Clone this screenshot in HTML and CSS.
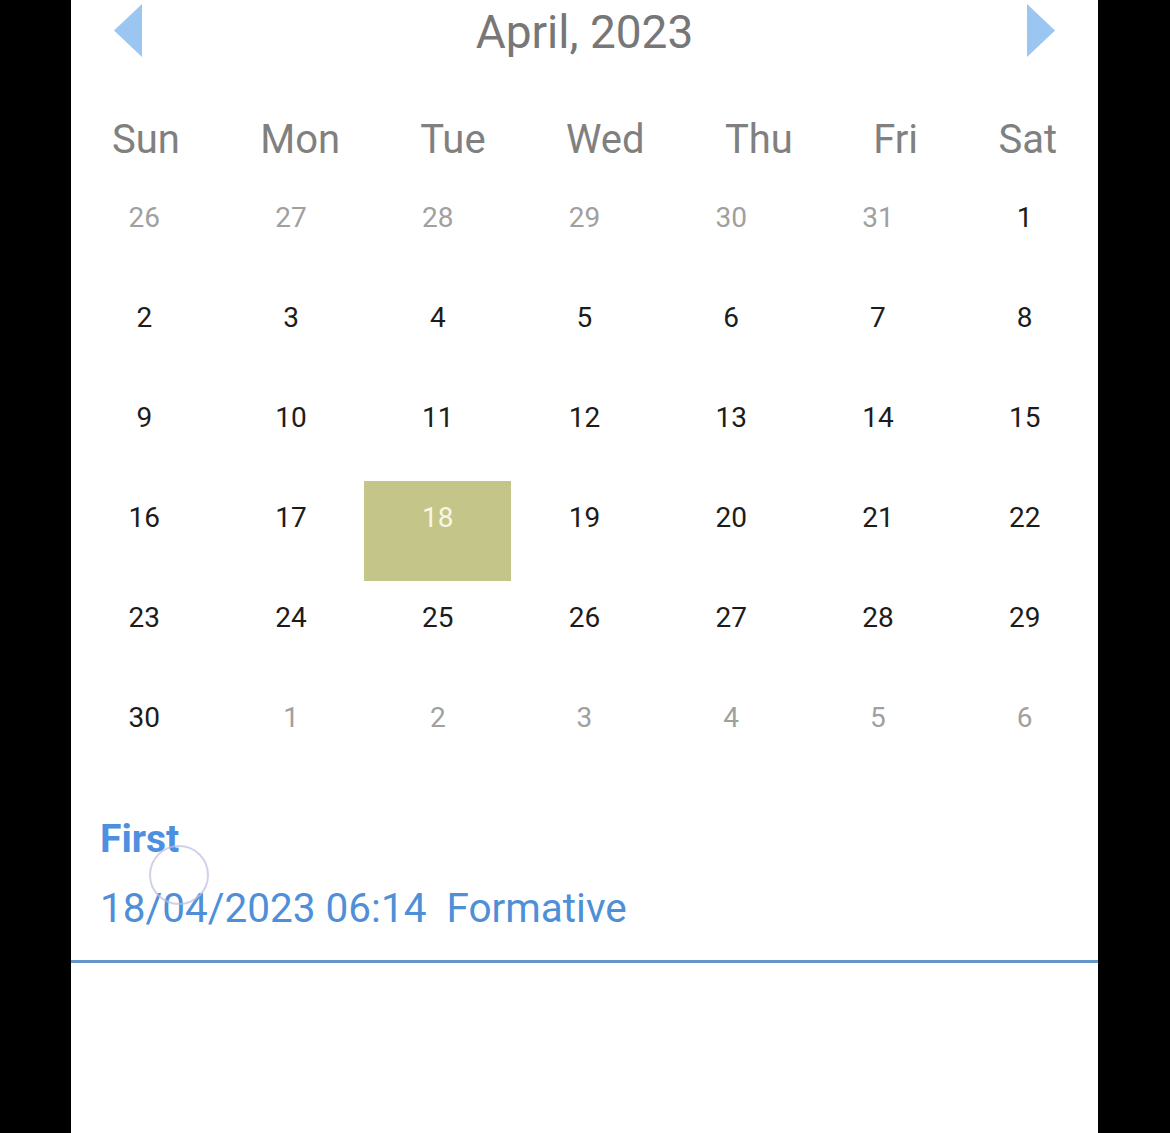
FILE: index.html
```html
<!DOCTYPE html>
<html>
<head>
<meta charset="utf-8">
<link rel="stylesheet" href="styles.css">
</head>
<body>
<div class="panel">
  <div class="header">
    <svg class="arrow" width="28" height="53" viewBox="0 0 28 53"><polygon points="28,0 28,53 0,26.5" fill="#9cc6f2"/></svg>
    <div class="title">April, 2023</div>
    <svg class="arrow" width="28" height="53" viewBox="0 0 28 53"><polygon points="0,0 0,53 28,26.5" fill="#9cc6f2"/></svg>
  </div>
  <div class="weekdays">
    <div>Sun</div><div>Mon</div><div>Tue</div><div>Wed</div><div>Thu</div><div>Fri</div><div>Sat</div>
  </div>
  <div class="days">
    <div class="day other">26</div><div class="day other">27</div><div class="day other">28</div><div class="day other">29</div><div class="day other">30</div><div class="day other">31</div><div class="day">1</div>
    <div class="day">2</div><div class="day">3</div><div class="day">4</div><div class="day">5</div><div class="day">6</div><div class="day">7</div><div class="day">8</div>
    <div class="day">9</div><div class="day">10</div><div class="day">11</div><div class="day">12</div><div class="day">13</div><div class="day">14</div><div class="day">15</div>
    <div class="day">16</div><div class="day">17</div><div class="day selected">18</div><div class="day">19</div><div class="day">20</div><div class="day">21</div><div class="day">22</div>
    <div class="day">23</div><div class="day">24</div><div class="day">25</div><div class="day">26</div><div class="day">27</div><div class="day">28</div><div class="day">29</div>
    <div class="day">30</div><div class="day other">1</div><div class="day other">2</div><div class="day other">3</div><div class="day other">4</div><div class="day other">5</div><div class="day other">6</div>
  </div>
  <div class="event">
    <div class="event-name">First</div>
    <div class="event-detail">18/04/2023 06:14  Formative</div>
    <div class="touch"></div>
  </div>
</div>
</body>
</html>
```
FILE: styles.css
```css
html, body {
  margin: 0;
  padding: 0;
  background: #000;
}
body {
  font-family: Roboto, "Noto Sans", sans-serif;
}
.panel {
  width: 1027px;
  height: 1133px;
  margin-left: 71px;
  background: #fff;
  overflow: hidden;
}
.header {
  height: 61px;
  padding: 4px 43px 0;
  box-sizing: border-box;
  display: flex;
  align-items: flex-start;
  justify-content: space-between;
}
.arrow {
  display: block;
}
.title {
  font-size: 46px;
  line-height: 56px;
  color: #777;
}
.weekdays {
  display: flex;
  justify-content: space-between;
  height: 120px;
  padding: 55px 41px 0;
  box-sizing: border-box;
  font-size: 40px;
  line-height: 48px;
  color: #808080;
}
.days {
  display: grid;
  grid-template-columns: repeat(7, 1fr);
  grid-auto-rows: 100px;
}
.day {
  text-align: center;
  font-size: 28px;
  line-height: 34px;
  padding-top: 20px;
  color: #1c1c1c;
}
.day.other {
  color: #a0a0a0;
}
.day.selected {
  background: #c3c688;
  color: #f8f6e4;
}
.event {
  position: relative;
  padding: 35px 29px 0;
  height: 182px;
  box-sizing: border-box;
  border-bottom: 3px solid #6496cc;
}
.event-name {
  font-size: 39px;
  font-weight: bold;
  line-height: 46px;
  color: #4d8fe0;
}
.event-detail {
  font-size: 40.5px;
  line-height: 48px;
  margin-top: 22px;
  color: #4f8fd8;
  white-space: pre;
}
.touch {
  position: absolute;
  left: 78px;
  top: 64px;
  width: 56px;
  height: 56px;
  border: 2px solid rgba(190, 190, 225, 0.7);
  border-radius: 50%;
}
```
